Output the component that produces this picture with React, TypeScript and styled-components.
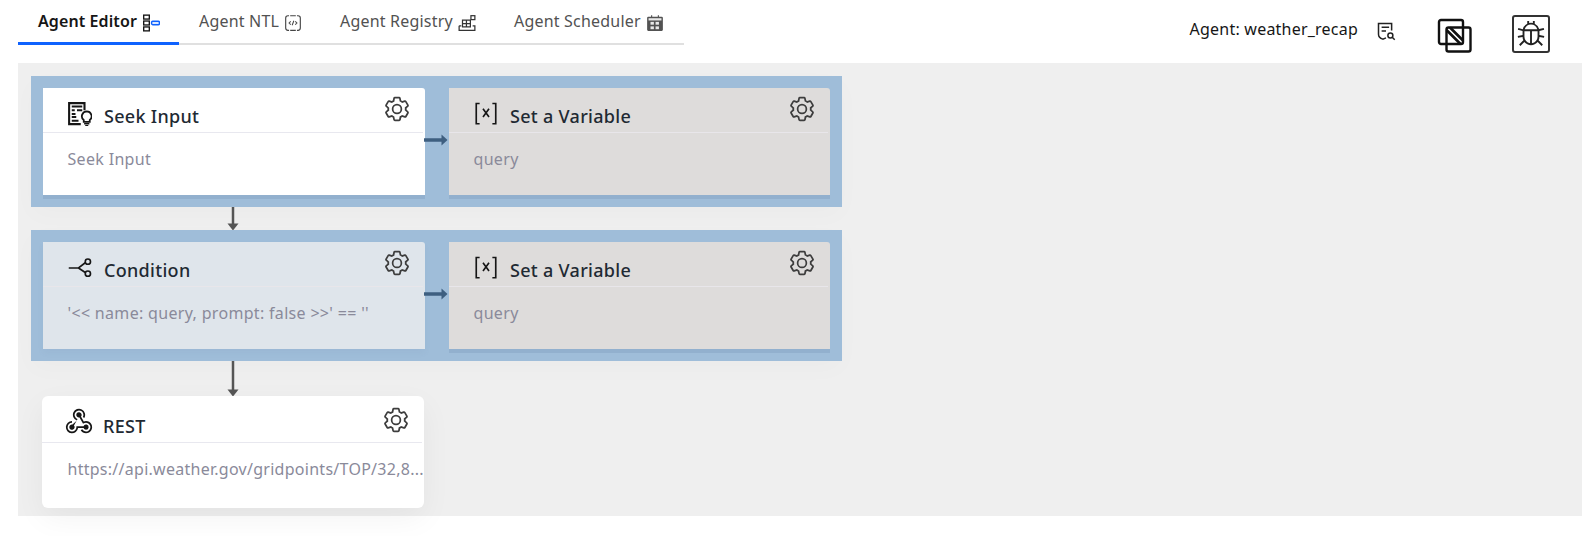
import React from "react";
import styled, { createGlobalStyle } from "styled-components";

const Global = createGlobalStyle`
  html, body { margin: 0; padding: 0; background: #fff; overflow: hidden; }
  body { font-family: "Noto Sans", "Open Sans", sans-serif; }
  * { box-sizing: border-box; }
`;

const Page = styled.div`
  width: 1582px;
  height: 536px;
  display: flex;
  flex-direction: column;
`;
const TopBar = styled.header`
  height: 63px;
  flex: none;
  display: flex;
  align-items: flex-start;
  justify-content: space-between;
  padding-left: 18px;
`;
const Tabs = styled.nav`
  display: flex;
  height: 45px;
`;
const Tab = styled.div<{ $active?: boolean; $w: number }>`
  width: ${(p) => p.$w}px;
  height: 45px;
  padding: 11px 0 0 20px;
  display: flex;
  align-items: flex-start;
  gap: 5px;
  font-size: 16px;
  line-height: 21px;
  white-space: nowrap;
  letter-spacing: ${(p) => (p.$active ? "0.1px" : "0.2px")};
  font-weight: ${(p) => (p.$active ? 600 : 400)};
  color: ${(p) => (p.$active ? "#161616" : "#525252")};
  border-bottom: ${(p) => (p.$active ? "3px solid #0f62fe" : "2px solid #e0e0e0")};
`;
const TabIcon = styled.svg`
  width: 18px;
  height: 18px;
  flex: none;
  margin-top: 3px;
`;
const Meta = styled.div`
  display: flex;
  align-items: flex-start;
  padding-right: 32px;
`;
const AgentName = styled.span`
  margin-top: 19px;
  font-size: 16px;
  line-height: 21px;
  color: #161616;
  letter-spacing: 0.22px;
`;
const FeedbackIcon = styled.svg`
  width: 20px;
  height: 20px;
  margin: 21px 0 0 18px;
`;
const CopyIcon = styled.svg`
  width: 36px;
  height: 36px;
  margin: 18px 0 0 41px;
`;
const BugBox = styled.div`
  width: 38px;
  height: 38px;
  margin: 15px 0 0 39px;
  border: 2px solid #333;
  border-radius: 3px;
  display: flex;
  align-items: center;
  justify-content: center;
`;
const BugIcon = styled.svg`
  width: 30px;
  height: 30px;
  fill: #222;
`;
const Canvas = styled.main`
  margin-left: 18px;
  height: 453px;
  background: #efefef;
  padding: 13px 0 0 13px;
  display: flex;
  flex-direction: column;
  align-items: flex-start;
`;
const Group = styled.section`
  width: 811px;
  padding: 12px;
  display: flex;
  background: #9fbdd9;
  box-shadow: 0 8px 24px rgba(0, 0, 0, 0.02);
`;
const Card = styled.article<{ $tone: "white" | "stone" | "mist"; $w: number; $free?: boolean }>`
  width: ${(p) => p.$w}px;
  height: ${(p) => (p.$free ? "112px" : "106.5px")};
  flex: none;
  background: ${(p) => (p.$tone === "white" ? "#fff" : p.$tone === "stone" ? "#dedcdb" : "#dfe5eb")};
  border-radius: ${(p) => (p.$free ? "6px" : "0 3px 0 0")};
  margin-left: ${(p) => (p.$free ? "11px" : "0")};
  box-shadow: ${(p) =>
    p.$free
      ? "0 10px 30px rgba(0, 0, 0, 0.05)"
      : p.$tone === "mist"
      ? "0 4px 6px rgba(70, 100, 140, 0.05)"
      : "0 4px 0 rgba(60, 90, 130, 0.13)"};
  display: flex;
  flex-direction: column;
`;
const CardHead = styled.header<{ $free?: boolean; $tight?: boolean }>`
  height: ${(p) => (p.$free ? "46.5px" : "44.5px")};
  flex: none;
  margin-right: 2px;
  border-bottom: 1px solid ${(p) => (p.$tight ? "#e8e6ea" : "#e8e8ef")};
  padding: ${(p) => (p.$free ? "9.5px" : "7px")} 12px 0 25px;
  display: flex;
  align-items: flex-start;
`;
const NodeIcon = styled.svg`
  width: 24px;
  height: 24px;
  flex: none;
  margin: 7px 12px 0 0;
`;
const WebhookGlyph = styled.svg`
  width: 28px;
  height: 28px;
  flex: none;
  margin: 1px 10px 0 -2px;
  fill: #161616;
`;
const Title = styled.h3<{ $free?: boolean }>`
  margin: ${(p) => (p.$free ? "8px" : "9px")} 0 0;
  flex: 1;
  font-size: 18px;
  line-height: 24px;
  font-weight: 500;
  letter-spacing: 0.3px;
  color: #1f2a33;
`;
const Gear = styled.svg`
  width: 28px;
  height: 28px;
  flex: none;
  fill: #3d3d3d;
`;
const CardBody = styled.p<{ $free?: boolean }>`
  margin: 0;
  padding: ${(p) => (p.$free ? "15.5px 0 0 25.5px" : "15.5px 2px 0 24.5px")};
  font-size: 16px;
  line-height: 22px;
  letter-spacing: ${(p) => (p.$free ? "0.27px" : "0.32px")};
  color: #8a8a9a;
  white-space: nowrap;
`;
const HConnector = styled.div`
  width: 24px;
  flex: none;
  position: relative;
`;
const HArrow = styled.svg`
  position: absolute;
  left: -1px;
  top: 46px;
  width: 24px;
  height: 12px;
`;
const VConnector = styled.svg<{ $h: number }>`
  display: block;
  width: 12px;
  height: ${(p) => p.$h}px;
  margin-left: 196px;
  flex: none;
`;

const gearPaths =
  "M27,16.76c0-.25,0-.5,0-.76s0-.51,0-.77l1.92-1.68A2,2,0,0,0,29.3,11L26.94,7a2,2,0,0,0-1.73-1,2,2,0,0,0-.64.1l-2.43.82a11.35,11.35,0,0,0-1.31-.75l-.51-2.52a2,2,0,0,0-2-1.61H13.64a2,2,0,0,0-2,1.61l-.51,2.52a11.48,11.48,0,0,0-1.32.75L7.43,6.06A2,2,0,0,0,6.79,6,2,2,0,0,0,5.06,7L2.7,11a2,2,0,0,0,.41,2.51L5,15.24c0,.25,0,.5,0,.76s0,.51,0,.77L3.11,18.45A2,2,0,0,0,2.7,21L5.06,25a2,2,0,0,0,1.73,1,2,2,0,0,0,.64-.1l2.43-.82a11.35,11.35,0,0,0,1.31.75l.51,2.52a2,2,0,0,0,2,1.61h4.72a2,2,0,0,0,2-1.61l.51-2.52a11.48,11.48,0,0,0,1.32-.75l2.42.82a2,2,0,0,0,.64.1,2,2,0,0,0,1.73-1L29.3,21a2,2,0,0,0-.41-2.51ZM25.21,24l-3.43-1.16a8.86,8.86,0,0,1-2.71,1.57L18.36,28H13.64l-.71-3.55a9.36,9.36,0,0,1-2.7-1.57L6.79,24,4.43,20l2.72-2.4a8.9,8.9,0,0,1,0-3.13L4.43,12,6.79,8l3.43,1.16a8.86,8.86,0,0,1,2.71-1.57L13.64,4h4.72l.71,3.55a9.36,9.36,0,0,1,2.7,1.57L25.21,8,27.57,12l-2.72,2.4a8.9,8.9,0,0,1,0,3.13L27.57,20Z M16,22a6,6,0,1,1,6-6A5.94,5.94,0,0,1,16,22Zm0-10a3.91,3.91,0,0,0-4,4,3.91,3.91,0,0,0,4,4,3.91,3.91,0,0,0,4-4A3.91,3.91,0,0,0,16,12Z";

const GearIcon = () => (
  <Gear viewBox="0 0 32 32">
    <path d={gearPaths} fillRule="evenodd" />
  </Gear>
);

const stroke = { fill: "none", stroke: "#161616", strokeWidth: 2 } as const;

const SeekIcon = () => (
  <NodeIcon viewBox="0 0 32 32">
    <g {...stroke}>
      <path d="M22 11V1.500H1.500v28H17" strokeWidth="2.800" />
      <path d="M5 6h14M5 11h4M12 11h7M5 16h5M5 20h6M5 25h9" strokeWidth="2.400" />
      <path d="M25 12.500a6.500 6.500 0 0 0-4 11.600V26.500h8v-2.400A6.500 6.500 0 0 0 25 12.500z" strokeWidth="2.400" />
      <path d="M21.500 29h7M23 31.500h4" />
    </g>
  </NodeIcon>
);
const VariableIcon = () => (
  <NodeIcon viewBox="0 0 32 32">
    <g {...stroke} strokeWidth="2.200">
      <path d="M7.500 2H3v27h4.500M24.500 2H29v27h-4.500" />
      <path d="M12 9l8 11M20 9l-8 11" />
    </g>
  </NodeIcon>
);
const ConditionIcon = () => (
  <NodeIcon viewBox="0 0 32 32">
    <g {...stroke} strokeWidth="2.200">
      <path d="M1 16h13l9-7M14 16l9 6" />
      <circle cx="26.500" cy="7.500" r="3.500" />
      <circle cx="26.500" cy="23.500" r="3.500" />
    </g>
  </NodeIcon>
);
const WebhookIcon = () => (
  <WebhookGlyph viewBox="0 0 32 32">
    <path d="M24,26a3,3,0,1,0-2.8164-4H13v1a5,5,0,1,1-5-5V16a7,7,0,1,0,6.9287,8h6.2549A2.9914,2.9914,0,0,0,24,26Z" />
    <path d="M24,16a7.024,7.024,0,0,0-2.57.4873l-3.1656-5.5395a3.0469,3.0469,0,1,0-1.7326.9985l4.1189,7.2085.8686-.4976a5.0006,5.0006,0,1,1-1.851,6.8418L17.937,26.501A7.0005,7.0005,0,1,0,24,16Z" />
    <path d="M8.532,20.0537a3.03,3.03,0,1,0,1.7326.9985L13.89,14.708l.4976-.8682-.8677-.497a5,5,0,1,1,6.812-1.8438l1.7315,1.0018a6.9991,6.9991,0,1,0-8.485,3.0117Z" />
  </WebhookGlyph>
);

const EditorTabIcon = () => (
  <TabIcon viewBox="0 0 32 32">
    <g fill="none" stroke="#161616" strokeWidth="2.400">
      <rect x="3" y="2" width="10" height="7" />
      <rect x="3" y="12.500" width="10" height="7" />
      <rect x="3" y="23" width="10" height="7" />
    </g>
    <rect x="17" y="13" width="14" height="6" rx="2" fill="#dbe8ff" stroke="#0f62fe" strokeWidth="2.500" />
  </TabIcon>
);
const NtlTabIcon = () => (
  <TabIcon viewBox="0 0 32 32">
    <g fill="none" stroke="#444" strokeWidth="2">
      <path d="M9 3H7a4 4 0 0 0-4 4v18a4 4 0 0 0 4 4h2M23 3h2a4 4 0 0 1 4 4v18a4 4 0 0 1-4 4h-2M11 3h10M11 29h10" />
      <path d="M12 13l-3 3 3 3M20 13l3 3-3 3M17.500 12l-3 8" strokeWidth="1.800" />
    </g>
  </TabIcon>
);
const RegistryTabIcon = () => (
  <TabIcon viewBox="0 0 32 32">
    <g fill="none" stroke="#333" strokeWidth="2.200">
      <path d="M2 21v8h28v-8h-4M6 21H2" />
      <path d="M8 11h14v12H8zM8 17h14M15 11v12" />
      <rect x="23" y="3" width="7" height="7" />
    </g>
  </TabIcon>
);
const SchedulerTabIcon = () => (
  <TabIcon viewBox="0 0 32 32">
    <path d="M9 2h2v3h10V2h2v3h5a2 2 0 0 1 2 2v21a2 2 0 0 1-2 2H4a2 2 0 0 1-2-2V7a2 2 0 0 1 2-2h5z" fill="#525252" />
    <rect x="4.500" y="7.500" width="23" height="4" fill="#e8e8e8" />
    <g fill="#e8e8e8">
      <rect x="8" y="14" width="6" height="5" />
      <rect x="17" y="14" width="6" height="5" />
      <rect x="8" y="22" width="6" height="5" />
      <rect x="17" y="22" width="6" height="5" />
    </g>
  </TabIcon>
);

const Arrow = () => (
  <HArrow viewBox="0 0 24 12">
    <path d="M0 6h19" stroke="#3e5f80" strokeWidth="3.500" />
    <path d="M17.500 0.500L23.500 6l-6 5.500z" fill="#3e5f80" />
  </HArrow>
);
const Down = ({ h }: { h: number }) => (
  <VConnector $h={h} viewBox={`0 0 12 ${h}`}>
    <path d={`M6 0V${h - 5}`} stroke="#555" strokeWidth="2.500" />
    <path d={`M0.500 ${h - 7}h11L6 ${h}z`} fill="#555" />
  </VConnector>
);

type NodeProps = {
  icon: React.ReactNode;
  title: string;
  body: string;
  tone: "white" | "stone" | "mist";
  w?: number;
  free?: boolean;
};
const Node = ({ icon, title, body, tone, w = 382, free }: NodeProps) => (
  <Card $tone={tone} $w={w} $free={free}>
    <CardHead $free={free} $tight={tone !== "white"}>
      {icon}
      <Title $free={free}>{title}</Title>
      <GearIcon />
    </CardHead>
    <CardBody $free={free}>{body}</CardBody>
  </Card>
);

export default function App() {
  return (
    <Page>
      <Global />
      <TopBar>
        <Tabs>
          <Tab $active $w={161}>
            Agent Editor
            <EditorTabIcon />
          </Tab>
          <Tab $w={141}>
            Agent NTL
            <NtlTabIcon />
          </Tab>
          <Tab $w={174}>
            Agent Registry
            <RegistryTabIcon />
          </Tab>
          <Tab $w={190}>
            Agent Scheduler
            <SchedulerTabIcon />
          </Tab>
        </Tabs>
        <Meta>
          <AgentName>Agent: weather_recap</AgentName>
          <FeedbackIcon viewBox="0 0 32 32">
            <g fill="none" stroke="#222" strokeWidth="2.400">
              <path d="M16 27l-5 2c-3-1-7-3-7-8V4h21v11" />
              <path d="M9 10h12M9 16h7" />
              <circle cx="23" cy="23" r="4" />
              <path d="M26 26l4 4" />
            </g>
          </FeedbackIcon>
          <CopyIcon viewBox="0 0 36 36">
            <g fill="none" stroke="#111" strokeWidth="2.400" strokeLinejoin="round">
              <rect x="2" y="2" width="24" height="24" rx="2" />
              <rect x="9.500" y="9.500" width="24" height="24" rx="2" />
              <path d="M9.500 12l14 14M13 9.500l13 13" strokeWidth="2.600" />
            </g>
          </CopyIcon>
          <BugBox>
            <BugIcon viewBox="0 0 32 32">
              <path d="M29.83,20l.34-2L25,17.15V13c0-.08,0-.15,0-.23l5.06-1.36-.51-1.93-4.83,1.29A9,9,0,0,0,20,5V2H18V4.230a8.810,8.810,0,0,0-4,0V2H12V5a9,9,0,0,0-4.710,5.820L2.460,9.480,2,11.410,7,12.770c0,.08,0,.15,0,.23v4.150L1.840,18l.32,2L7,19.180a8.900,8.900,0,0,0,.82,3.570L3.290,27.290l1.420,1.420,4.190-4.200a9,9,0,0,0,14.200,0l4.190,4.200,1.420-1.420-4.540-4.540A8.900,8.900,0,0,0,25,19.180ZM15,25.920A7,7,0,0,1,9,19V13h6ZM9.290,11a7,7,0,0,1,13.420,0ZM23,19a7,7,0,0,1-6,6.920V13h6Z" />
            </BugIcon>
          </BugBox>
        </Meta>
      </TopBar>
      <Canvas>
        <Group>
          <Node icon={<SeekIcon />} title="Seek Input" body="Seek Input" tone="white" />
          <HConnector>
            <Arrow />
          </HConnector>
          <Node icon={<VariableIcon />} title="Set a Variable" body="query" tone="stone" w={381} />
        </Group>
        <Down h={23.5} />
        <Group>
          <Node
            icon={<ConditionIcon />}
            title="Condition"
            body="'<< name: query, prompt: false >>' == ''"
            tone="mist"
          />
          <HConnector>
            <Arrow />
          </HConnector>
          <Node icon={<VariableIcon />} title="Set a Variable" body="query" tone="stone" w={381} />
        </Group>
        <Down h={35.5} />
        <Node
          icon={<WebhookIcon />}
          title="REST"
          body="https://api.weather.gov/gridpoints/TOP/32,8..."
          tone="white"
          free
        />
      </Canvas>
    </Page>
  );
}
